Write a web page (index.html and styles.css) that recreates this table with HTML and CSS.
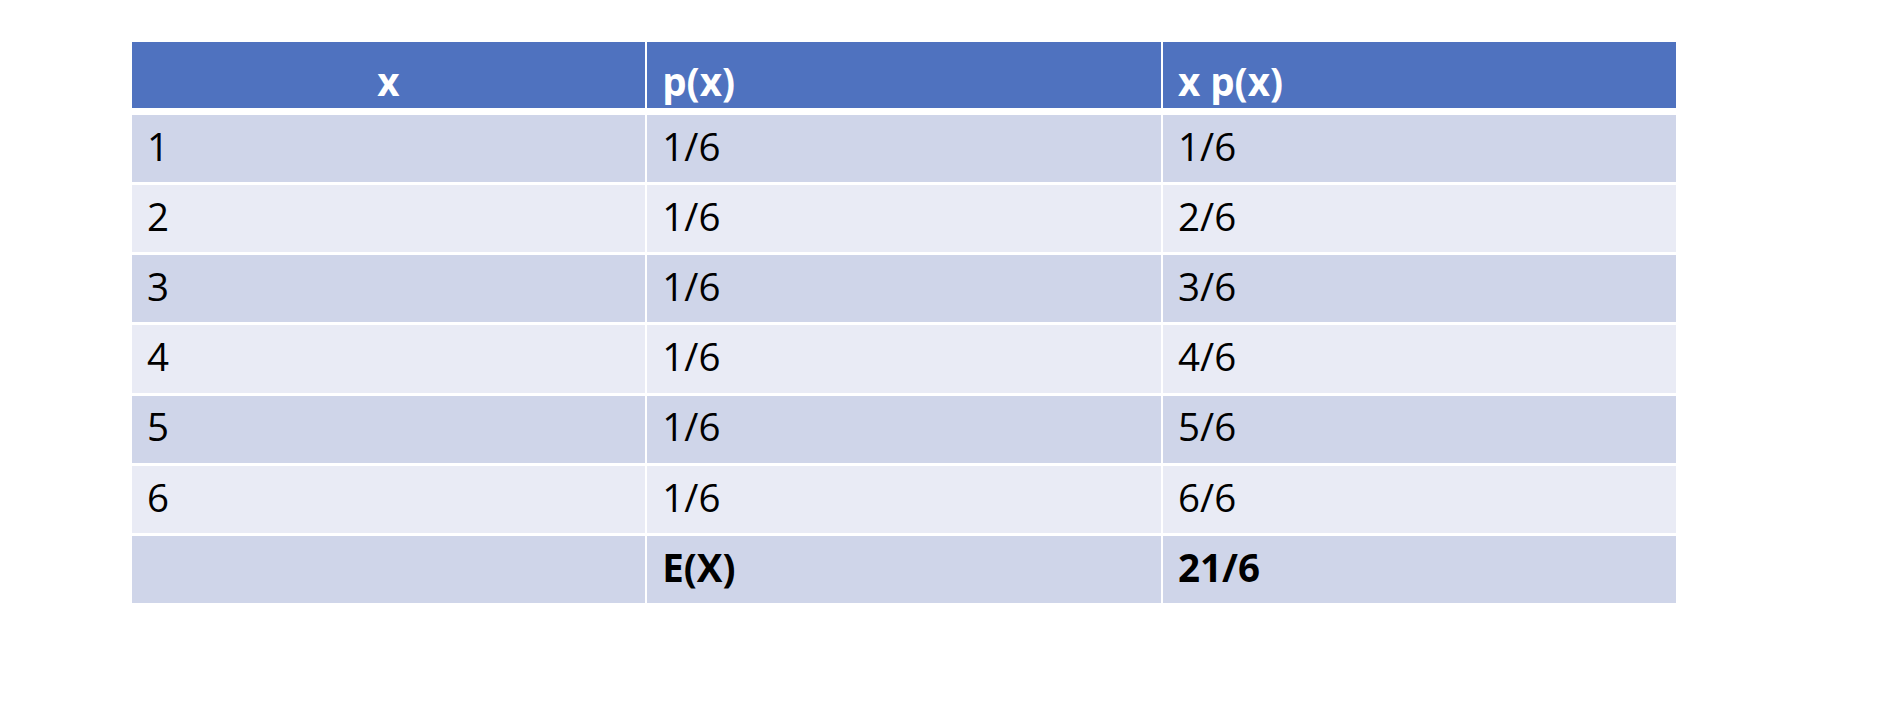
FILE: index.html
```html
<!DOCTYPE html>
<html lang="en">
<head>
<meta charset="utf-8">
<title>Expected value table</title>
<link rel="stylesheet" href="styles.css">
</head>
<body>
<div class="page">
  <div class="table">
    <div class="thead">
      <div class="th th-center">x</div>
      <div class="th">p(x)</div>
      <div class="th">x p(x)</div>
    </div>
    <div class="tbody">
      <div class="td odd">1</div><div class="td odd">1/6</div><div class="td odd">1/6</div>
      <div class="td even">2</div><div class="td even">1/6</div><div class="td even">2/6</div>
      <div class="td odd">3</div><div class="td odd">1/6</div><div class="td odd">3/6</div>
      <div class="td even">4</div><div class="td even">1/6</div><div class="td even">4/6</div>
      <div class="td odd">5</div><div class="td odd">1/6</div><div class="td odd">5/6</div>
      <div class="td even">6</div><div class="td even">1/6</div><div class="td even">6/6</div>
      <div class="td odd"></div><div class="td odd bold">E(X)</div><div class="td odd bold">21/6</div>
    </div>
  </div>
</div>
</body>
</html>
```

FILE: styles.css
```css
html, body {
  margin: 0;
  padding: 0;
  background: #ffffff;
}

.page {
  width: 1880px;
  height: 722px;
  padding: 42px 0 0 132px;
  box-sizing: border-box;
  font-family: "Open Sans", "Liberation Sans", sans-serif;
}

.table {
  width: 1544px;
  display: flex;
  flex-direction: column;
}

.thead {
  display: grid;
  grid-template-columns: 513px 513.5px 513px;
  column-gap: 2.25px;
  height: 66px;
  margin-bottom: 7px;
}

.th {
  background: #4f72bf;
  color: #ffffff;
  font-weight: 700;
  font-size: 38.5px;
  line-height: 1;
  display: flex;
  align-items: center;
  padding: 12px 0 0 15px;
  box-sizing: border-box;
}

.th-center {
  justify-content: center;
  padding-left: 0;
}

.tbody {
  display: grid;
  grid-template-columns: 513px 513.5px 513px;
  grid-auto-rows: 67.17px;
  column-gap: 2.25px;
  row-gap: 3px;
}

.td {
  color: #000000;
  font-size: 38.5px;
  font-weight: 500;
  line-height: 1;
  display: flex;
  align-items: center;
  padding: 0 0 5px 15px;
  box-sizing: border-box;
}

.odd {
  background: #cfd5e9;
}

.even {
  background: #e9ebf5;
}

.bold {
  font-weight: 700;
}
```
